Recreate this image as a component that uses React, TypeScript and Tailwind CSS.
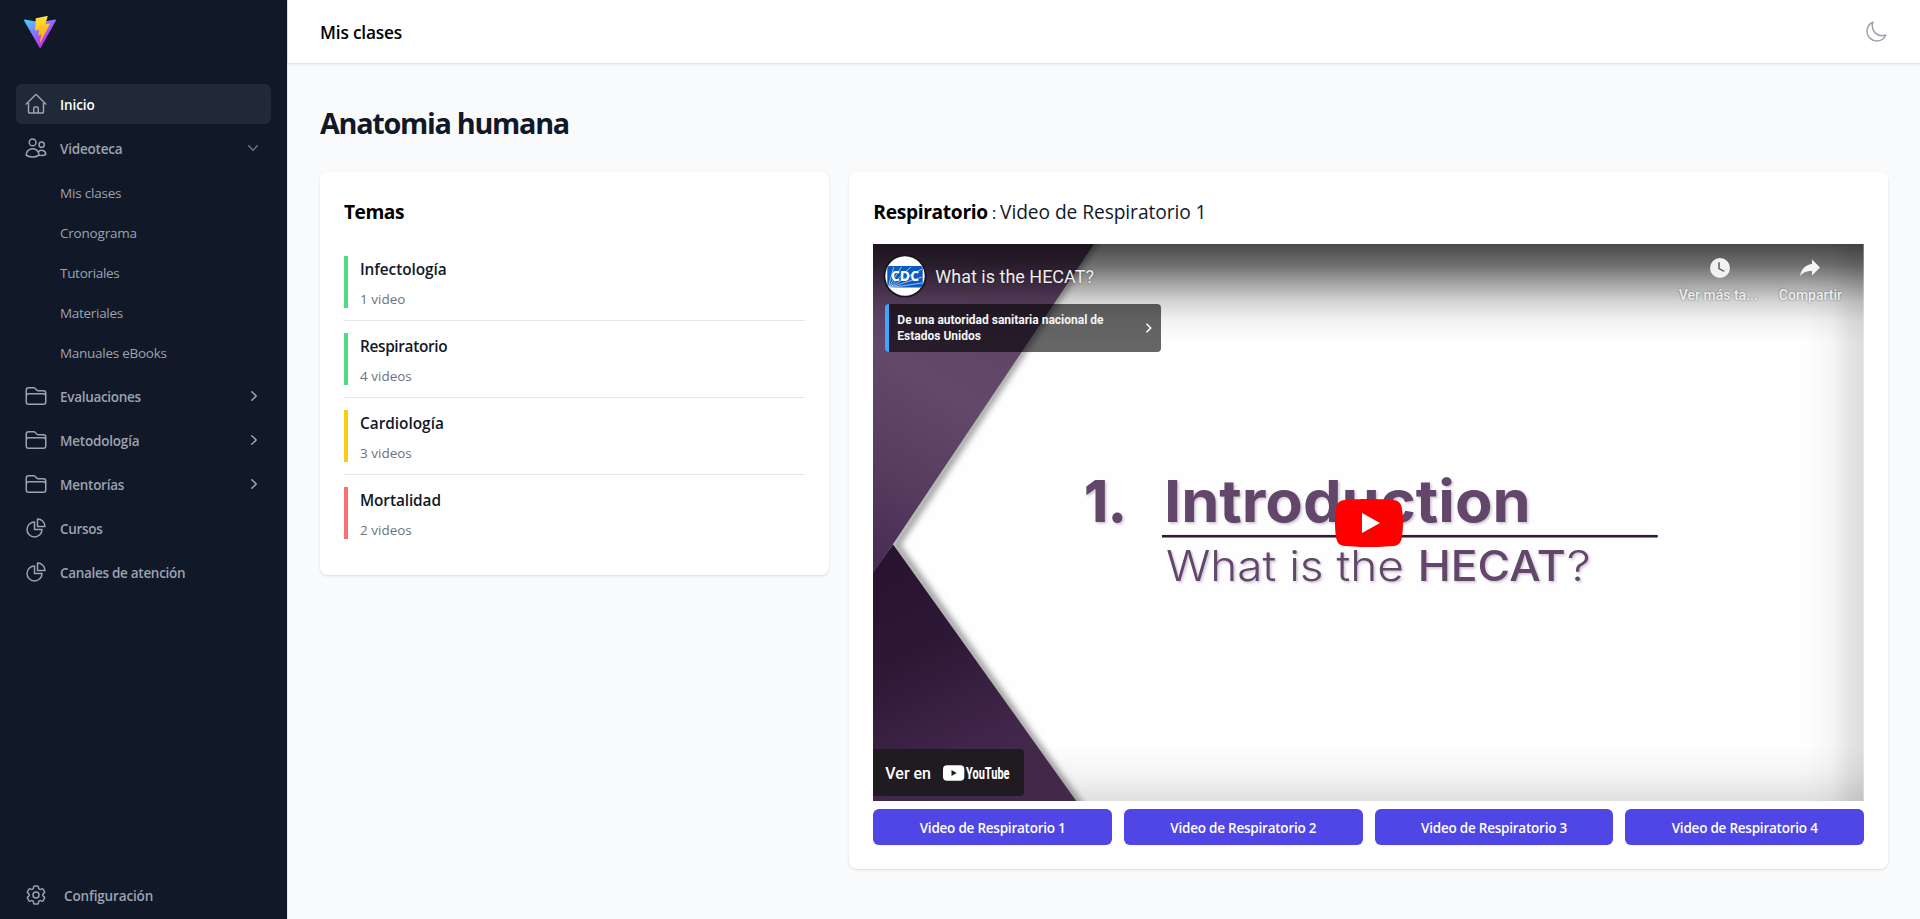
import {
  HiOutlineHome,
  HiOutlineUsers,
  HiOutlineFolder,
  HiOutlineChartPie,
  HiOutlineCog6Tooth,
  HiOutlineMoon,
} from 'react-icons/hi2';
import type { IconType } from 'react-icons';

function Chevron({ className }: { className: string }) {
  return (
    <svg viewBox="0 0 20 20" fill="currentColor" className={className}>
      <path
        fillRule="evenodd"
        clipRule="evenodd"
        d="M7.21 14.77a.75.75 0 01.02-1.06L11.168 10 7.23 6.29a.75.75 0 111.04-1.08l4.5 4.25a.75.75 0 010 1.08l-4.5 4.25a.75.75 0 01-1.06-.02z"
      />
    </svg>
  );
}

function Logo() {
  return (
    <svg viewBox="0 0 256 257" className="size-8">
      <defs>
        <linearGradient id="logoBody" x1="-.828%" x2="57.636%" y1="7.652%" y2="78.411%">
          <stop offset="0%" stopColor="#41D1FF" />
          <stop offset="100%" stopColor="#BD34FE" />
        </linearGradient>
        <linearGradient id="logoBolt" x1="43.376%" x2="50.316%" y1="2.242%" y2="89.03%">
          <stop offset="0%" stopColor="#FFEA83" />
          <stop offset="8.333%" stopColor="#FFDD35" />
          <stop offset="100%" stopColor="#FFA800" />
        </linearGradient>
      </defs>
      <path
        fill="url(#logoBody)"
        d="M255.153 37.938L134.897 252.976c-2.483 4.44-8.862 4.466-11.382.048L.875 37.958c-2.746-4.814 1.371-10.646 6.827-9.67l120.385 21.517a6.537 6.537 0 0 0 2.322-.004l117.867-21.483c5.438-.991 9.574 4.796 6.877 9.62Z"
      />
      <path
        fill="url(#logoBolt)"
        d="M185.432.063L96.44 17.501a3.268 3.268 0 0 0-2.634 3.014l-5.474 92.456a3.268 3.268 0 0 0 3.997 3.378l24.777-5.718c2.318-.535 4.413 1.507 3.936 3.838l-7.361 36.047c-.495 2.426 1.782 4.5 4.151 3.78l15.304-4.649c2.372-.72 4.652 1.36 4.15 3.788l-11.698 56.621c-.732 3.542 3.979 5.473 5.943 2.437l1.313-2.028l72.516-144.72c1.215-2.423-.88-5.186-3.54-4.672l-25.505 4.922c-2.396.462-4.435-1.77-3.759-4.114l16.646-57.705c.677-2.35-1.37-4.583-3.769-4.113Z"
      />
    </svg>
  );
}

type Item = { label: string; icon: IconType; active?: boolean; more?: boolean; track: string };

const navBottom: Item[] = [
  { label: 'Evaluaciones', icon: HiOutlineFolder, more: true, track: 'tracking-[-0.3px]' },
  { label: 'Metodología', icon: HiOutlineFolder, more: true, track: 'tracking-[-0.2px]' },
  { label: 'Mentorías', icon: HiOutlineFolder, more: true, track: 'tracking-[-0.25px]' },
  { label: 'Cursos', icon: HiOutlineChartPie, track: 'tracking-[-0.3px]' },
  { label: 'Canales de atención', icon: HiOutlineChartPie, track: 'tracking-[-0.3px]' },
];

const subItems = [
  { label: 'Mis clases', track: 'tracking-[-0.2px]' },
  { label: 'Cronograma', track: 'tracking-[-0.2px]' },
  { label: 'Tutoriales', track: 'tracking-[-0.3px]' },
  { label: 'Materiales', track: 'tracking-[-0.3px]' },
  { label: 'Manuales eBooks', track: 'tracking-[-0.27px]' },
];

function NavRow({ item }: { item: Item }) {
  const Icon = item.icon;
  return (
    <a
      className={
        'flex h-10 items-center gap-3 rounded-md p-2 text-[13.5px] leading-6 font-semibold ' +
        (item.active ? 'bg-[#1f2937] text-white' : 'text-[#9ca3af]')
      }
    >
      <Icon className="size-6 shrink-0 text-[#9ca3af]" />
      <span className={'pt-0.5 ' + item.track}>{item.label}</span>
      {item.more && <Chevron className="-mr-px ml-auto size-5 text-[#9ca3af]" />}
    </a>
  );
}

function Sidebar() {
  return (
    <aside className="flex w-72 shrink-0 flex-col border-r border-[#e5e7eb] bg-[#111827] px-4">
      <div className="flex h-16 items-center px-2">
        <Logo />
      </div>
      <nav className="mt-5 flex grow flex-col gap-1">
        <NavRow item={{ label: 'Inicio', icon: HiOutlineHome, active: true, track: 'tracking-[-0.1px]' }} />
        <div>
          <button className="flex h-10 w-full items-center gap-3 rounded-md p-2 text-[13.5px] leading-6 font-semibold text-[#9ca3af]">
            <HiOutlineUsers className="size-6 shrink-0" />
            <span className="pt-0.5 tracking-[-0.2px]">Videoteca</span>
            <Chevron className="ml-auto size-5 rotate-90 text-[#6b7280]" />
          </button>
          <ul className="mt-1">
            {subItems.map((s) => (
              <li key={s.label} className={'flex h-10 items-center pt-0.5 pl-11 text-[13.5px] text-[#9ca3af] ' + s.track}>
                {s.label}
              </li>
            ))}
          </ul>
        </div>
        {navBottom.map((i) => (
          <NavRow key={i.label} item={i} />
        ))}
      </nav>
      <a className="mb-0.5 flex h-11 items-center gap-4 px-2 text-[13.5px] font-semibold tracking-[-0.15px] text-[#9ca3af]">
        <HiOutlineCog6Tooth className="size-6 shrink-0" />
        <span className="pt-0.5">Configuración</span>
      </a>
    </aside>
  );
}

const topics = [
  { name: 'Infectología', count: '1 video', bar: 'border-[#4ade80]', track: 'tracking-[-0.08px]' },
  { name: 'Respiratorio', count: '4 videos', bar: 'border-[#4ade80]', track: 'tracking-[-0.35px]' },
  { name: 'Cardiología', count: '3 videos', bar: 'border-[#facc15]', track: 'tracking-[-0.02px]' },
  { name: 'Mortalidad', count: '2 videos', bar: 'border-[#f87171]', track: 'tracking-[-0.1px]' },
];

function Topics() {
  return (
    <section className="rounded-lg bg-white p-6 shadow">
      <h2 className="text-[19.2px] leading-8 font-bold tracking-[-0.5px] text-black">Temas</h2>
      <ul className="mt-4 divide-y divide-[#e5e7eb]">
        {topics.map((t) => (
          <li key={t.name} className="py-3">
            <div className={'h-13 border-l-4 pl-3 ' + t.bar}>
              <p className={'text-[15.4px] leading-7 font-semibold text-[#111827] ' + t.track}>{t.name}</p>
              <p className="pt-[3px] text-[13.5px] leading-6 text-[#6b7280]">{t.count}</p>
            </div>
          </li>
        ))}
      </ul>
    </section>
  );
}

function Poster() {
  return (
    <svg viewBox="0 0 991 557" preserveAspectRatio="none" className="absolute inset-0 size-full">
      <defs>
        <linearGradient id="upper" x1="0.5" y1="0" x2="0.1" y2="1">
          <stop offset="0" stopColor="#5d4164" />
          <stop offset="0.45" stopColor="#624869" />
          <stop offset="0.75" stopColor="#573c5f" />
          <stop offset="1" stopColor="#482c54" />
        </linearGradient>
        <linearGradient id="lower" x1="0.1" y1="0" x2="0.5" y2="1">
          <stop offset="0" stopColor="#27122f" />
          <stop offset="0.4" stopColor="#2c1835" />
          <stop offset="0.8" stopColor="#40264a" />
          <stop offset="1" stopColor="#432949" />
        </linearGradient>
        <linearGradient id="right" x1="0" y1="0" x2="1" y2="0">
          <stop offset="0" stopColor="#000" stopOpacity="0" />
          <stop offset="0.45" stopColor="#000" stopOpacity="0.03" />
          <stop offset="0.8" stopColor="#000" stopOpacity="0.11" />
          <stop offset="1" stopColor="#000" stopOpacity="0.13" />
        </linearGradient>
        <linearGradient id="bottom" x1="0" y1="0" x2="0" y2="1">
          <stop offset="0" stopColor="#000" stopOpacity="0" />
          <stop offset="0.5" stopColor="#000" stopOpacity="0.04" />
          <stop offset="1" stopColor="#000" stopOpacity="0.12" />
        </linearGradient>
        <linearGradient id="top" x1="0" y1="0" x2="0" y2="1">
          <stop offset="0" stopColor="#000" stopOpacity="0.71" />
          <stop offset="0.22" stopColor="#000" stopOpacity="0.56" />
          <stop offset="0.4" stopColor="#000" stopOpacity="0.36" />
          <stop offset="0.58" stopColor="#000" stopOpacity="0.17" />
          <stop offset="0.78" stopColor="#000" stopOpacity="0.05" />
          <stop offset="1" stopColor="#000" stopOpacity="0" />
        </linearGradient>
        <filter id="soft" x="-20%" y="-20%" width="140%" height="140%">
          <feGaussianBlur stdDeviation="3" />
        </filter>
        <filter id="textShadow" x="-5%" y="-20%" width="110%" height="150%">
          <feDropShadow dx="1.5" dy="1.5" stdDeviation="1" floodColor="#6b4f74" floodOpacity="0.35" />
        </filter>
      </defs>
      <rect width="991" height="557" fill="#fefefe" />
      <rect x="931" width="60" height="557" fill="url(#right)" />
      <rect y="502" width="991" height="55" fill="url(#bottom)" />
      <path d="M224 -6 L23 301 L208 563" fill="none" stroke="#000" strokeOpacity="0.4" strokeWidth="7" filter="url(#soft)" />
      <path d="M0 328 L20 300 L203.5 557 H0Z" fill="url(#lower)" />
      <path d="M0 0 H221 L20 300 L0 329Z" fill="url(#upper)" />
      <g fill="#62476a" fontFamily="Inter, sans-serif" filter="url(#textShadow)">
        <text x="211" y="278" fontSize="58" fontWeight="800" textLength="43" lengthAdjust="spacingAndGlyphs">
          1.
        </text>
        <text x="291" y="278" fontSize="58" fontWeight="700" textLength="367" lengthAdjust="spacingAndGlyphs">
          Introduction
        </text>
        <text x="293" y="337" fontSize="42.5" fontWeight="300" textLength="238" lengthAdjust="spacingAndGlyphs">
          What is the
        </text>
        <text x="545" y="337" fontSize="42.5" fontWeight="500" textLength="148" lengthAdjust="spacingAndGlyphs">
          HECAT
        </text>
        <text x="694" y="337" fontSize="42.5" fontWeight="300" textLength="24" lengthAdjust="spacingAndGlyphs">
          ?
        </text>
      </g>
      <rect x="289" y="290.8" width="496" height="2.6" fill="#2f1a3b" />
      <rect width="991" height="98" fill="url(#top)" />
    </svg>
  );
}

function Avatar() {
  return (
    <svg viewBox="0 0 42 42" className="size-[42px] shrink-0 overflow-visible">
      <clipPath id="flag">
        <path d="M4 14.5Q4 12 6.500 12H38V34H4Z" />
      </clipPath>
      <clipPath id="disc">
        <circle cx="21" cy="21" r="19.700" />
      </clipPath>
      <circle cx="21" cy="21" r="21.600" fill="#1a141d" />
      <circle cx="21" cy="21" r="19.700" fill="#fff" />
      <g clipPath="url(#disc)">
        <rect x="3.300" y="11" width="35.400" height="21.500" rx="2" fill="#0a5bbf" />
        <g clipPath="url(#flag)" stroke="#dce8f6" strokeWidth="0.7">
          <path d="M4 33L10 11M4 33L18 11M4 33L28 11M4 33L38 14M4 33L38 22M4 33L38 28" />
        </g>
        <text
          x="7"
          y="25.500"
          fontFamily="'Open Sans', sans-serif"
          fontSize="14"
          fontWeight="700"
          fill="#fff"
          textLength="28"
          lengthAdjust="spacingAndGlyphs"
        >
          CDC
        </text>
      </g>
    </svg>
  );
}

function Player() {
  return (
    <div className="relative aspect-video w-full overflow-hidden font-['Roboto',sans-serif] text-white">
      <Poster />
      <div className="absolute inset-0">
        <div className="flex h-[60px] items-start justify-between pt-[11px] pr-[22px] pl-[11px]">
          <div className="flex items-center gap-[9px]">
            <Avatar />
            <span className="pt-0.5 text-lg text-[#eeeeee] [text-shadow:0_0_2px_rgba(0,0,0,.5)]">What is the HECAT?</span>
          </div>
          <div className="flex gap-[21px] text-sm font-medium text-[#eeeeee]">
            <div className="flex flex-col items-center">
              <svg viewBox="0 0 20 20" className="mt-[3px] ml-[3px] size-5">
                <circle cx="10" cy="10" r="10" fill="#f1f1f1" />
                <path d="M9 4.200V10.600L14.300 13.400" fill="none" stroke="#666" strokeWidth="1.600" />
              </svg>
              <span className="mt-[7px] [text-shadow:0_0_2px_rgba(0,0,0,.5)]">Ver más ta...</span>
            </div>
            <div className="flex flex-col items-center">
              <svg viewBox="0 0 20 20" className="mt-[3px] size-5">
                <path d="M12 1.500L20 9.500L12 17.500V13C6.500 13 2.500 14.500 0 18.200C1 12.500 4.500 7 12 6Z" fill="#f4f4f4" />
              </svg>
              <span className="mt-[7px] [text-shadow:0_0_2px_rgba(0,0,0,.5)]">Compartir</span>
            </div>
          </div>
        </div>
        <div className="ml-3 flex h-12 w-[276px] items-center justify-between rounded border-l-4 border-[#3ea6ff] bg-black/60 pr-[7px] pl-2">
          <p className="w-56 text-xs leading-4 font-bold text-[#f4f4f4]">
            De una autoridad sanitaria nacional de Estados Unidos
          </p>
          <svg viewBox="0 0 10 10" className="size-2.5">
            <path d="M2.500 0.800L6.700 5L2.500 9.200" fill="none" stroke="#fff" strokeWidth="1.600" />
          </svg>
        </div>
      </div>
      <div className="absolute inset-0 flex items-center justify-center">
        <svg viewBox="0 0 68 48" className="h-12 w-[68px]">
          <path
            fill="#f00"
            d="M66.520 7.740c-.78-2.930-2.490-5.410-5.420-6.190C55.790.13 34 0 34 0S12.210.13 6.900 1.550c-2.930.78-4.630 3.260-5.420 6.190C.060 13.050 0 24 0 24s.060 10.950 1.480 16.260c.78 2.930 2.490 5.410 5.420 6.190C12.210 47.870 34 48 34 48s21.790-.13 27.100-1.550c2.930-.78 4.640-3.260 5.420-6.190C67.940 34.950 68 24 68 24s-.060-10.950-1.480-16.260z"
          />
          <path fill="#fff" d="M45 24 27 14v20" />
        </svg>
      </div>
      <div className="absolute bottom-[5px] left-0 flex h-[47px] w-[151px] items-center rounded-r-sm bg-[#201b21] pl-3">
        <span className="w-[46px] pt-0.5 text-base font-medium whitespace-nowrap">Ver en</span>
        <svg viewBox="0 0 70 20" className="ml-3 h-5 w-[70px] overflow-visible">
          <rect x="0" y="2.300" width="21.300" height="15.400" rx="4" fill="#fff" />
          <path d="M8.500 7L13.700 10L8.500 13Z" fill="#201b21" />
          <text
            x="23"
            y="15.800"
            fontFamily="Roboto, sans-serif"
            fontWeight="800"
            fontSize="17"
            fill="#fff"
            textLength="43.500"
            lengthAdjust="spacingAndGlyphs"
          >
            YouTube
          </text>
        </svg>
      </div>
    </div>
  );
}

const videos = ['Video de Respiratorio 1', 'Video de Respiratorio 2', 'Video de Respiratorio 3', 'Video de Respiratorio 4'];

export default function App() {
  return (
    <div className="flex h-[919px] bg-[#f9fafb] font-['Open_Sans','Noto_Sans',sans-serif]">
      <Sidebar />
      <div className="flex min-w-0 grow flex-col">
        <header className="flex h-[63px] shrink-0 items-center justify-between bg-white px-8 shadow">
          <h1 className="pt-0.5 text-[17.3px] font-semibold tracking-[-0.18px] text-black">Mis clases</h1>
          <HiOutlineMoon className="size-6 text-[#9ca3af]" />
        </header>
        <main className="px-8 pt-10">
          <h2 className="text-[28.8px] leading-10 font-bold tracking-[-0.045em] text-[#111827]">Anatomia humana</h2>
          <div className="mt-[29px] grid grid-cols-3 items-start gap-5">
            <Topics />
            <section className="col-span-2 rounded-lg bg-white p-6 shadow">
              <h2 className="flex items-baseline gap-1 text-[19.2px] leading-8">
                <span className="font-bold tracking-[-0.33px] text-black">Respiratorio</span>
                <span className="text-base text-black">:</span>
                <span className="tracking-[-0.08px] text-[#111827]">Video de Respiratorio 1</span>
              </h2>
              <div className="mt-4">
                <Player />
              </div>
              <div className="mt-2 grid grid-cols-4 gap-3">
                {videos.map((v) => (
                  <button
                    key={v}
                    className="h-9 rounded-md bg-[#4f46e5] pt-0.5 text-[13.5px] font-semibold tracking-[-0.23px] text-white shadow-xs"
                  >
                    {v}
                  </button>
                ))}
              </div>
            </section>
          </div>
        </main>
      </div>
    </div>
  );
}
